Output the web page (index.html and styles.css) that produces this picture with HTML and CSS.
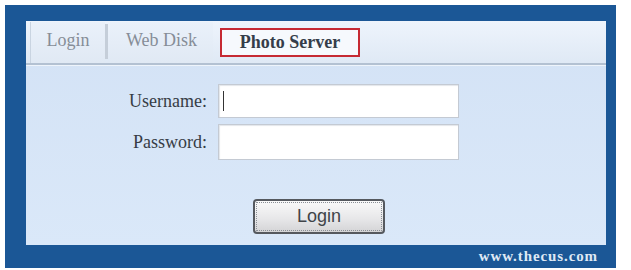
FILE: index.html
```html
<!DOCTYPE html>
<html>
<head>
<meta charset="utf-8">
<link rel="stylesheet" href="styles.css">
</head>
<body>
<div class="frame">
  <div class="panel">
    <div class="tabbar">
      <div class="tab tab-login">Login</div>
      <div class="sep"></div>
      <div class="tab tab-web">Web Disk</div>
      <div class="tab tab-photo">Photo Server</div>
    </div>
    <div class="form">
      <span class="lbl">Username:</span>
      <div class="input"><span class="caret"></span></div>
      <span class="lbl">Password:</span>
      <div class="input input-pw"></div>
    </div>
    <div class="btnrow">
      <button class="btn">Login</button>
    </div>
  </div>
  <div class="footer">www.thecus.com</div>
</div>
</body>
</html>
```
FILE: styles.css
```css
html, body { margin: 0; padding: 0; background: #ffffff; }
.frame {
  margin: 5px 0 0 5px;
  width: 611px;
  height: 263px;
  box-sizing: border-box;
  padding: 16px 10px 0 21px;
  background: #1b5796;
  display: flex;
  flex-direction: column;
}
.panel {
  height: 224px;
  background: linear-gradient(#d3e2f5, #dae8f9);
  display: flex;
  flex-direction: column;
}
.tab, .lbl, .footer {
  font-family: "Times New Roman", "Liberation Serif", Tinos, "DejaVu Serif", serif;
}
.tabbar {
  height: 41px;
  display: flex;
  align-items: stretch;
  padding: 1px 0 0 4px;
  background: linear-gradient(#eef4fc, #dfe9f5);
  border-bottom: 2px solid #b3c1d2;
  box-shadow: 0 1px 0 #eef4fb;
}
.tab {
  font-size: 18px;
  color: #868d97;
  display: flex;
  align-items: center;
  justify-content: center;
  padding-bottom: 4px;
}
.tab-login {
  width: 74px;
  border-left: 1px solid #c9d4e1;
  background: linear-gradient(#eaf1fa, #e0e9f4);
}
.sep {
  width: 3px;
  background: #c5ced9;
  margin: 2px 0 4px 0;
}
.tab-web {
  width: 103px;
  margin-left: 2px;
  background: linear-gradient(#eaf1fa, #e0e9f4);
}
.tab-photo {
  margin: 6px 0 6px 7px;
  width: 136px;
  border: 2px solid #c62a33;
  background: #f6f9fd;
  color: #353d4a;
  font-weight: bold;
  padding-bottom: 0;
}
.form {
  margin-top: 19px;
  display: grid;
  grid-template-columns: 181px 241px;
  column-gap: 11px;
  row-gap: 6px;
  align-items: center;
}
.lbl {
  text-align: right;
  font-size: 18px;
  color: #363c45;
}
.input {
  height: 34px;
  box-sizing: border-box;
  background: #ffffff;
  border: 1px solid #c4cad3;
  box-shadow: inset 1px 1px 1px #e3e6ea;
  display: flex;
  align-items: center;
  padding-left: 4px;
}
.input-pw { height: 36px; }
.caret {
  width: 1px;
  height: 20px;
  background: #333;
}
.btnrow {
  margin-top: 39px;
  padding-left: 227px;
}
.btn {
  width: 132px;
  height: 35px;
  border: 2px solid #55595f;
  border-radius: 4px;
  background: linear-gradient(#fafafa, #e6e6e8 60%, #d4d4d6);
  font-family: "Liberation Sans", Arial, sans-serif;
  font-size: 18px;
  color: #404449;
  padding: 0;
  outline: 1px dotted #8a8f96;
  outline-offset: -4px;
}
.footer {
  flex: 1;
  display: flex;
  align-items: center;
  justify-content: flex-end;
  padding-right: 8px;
  font-weight: bold;
  font-size: 15px;
  letter-spacing: 0.9px;
  color: #dfe9f5;
  padding-bottom: 1px;
}
```
